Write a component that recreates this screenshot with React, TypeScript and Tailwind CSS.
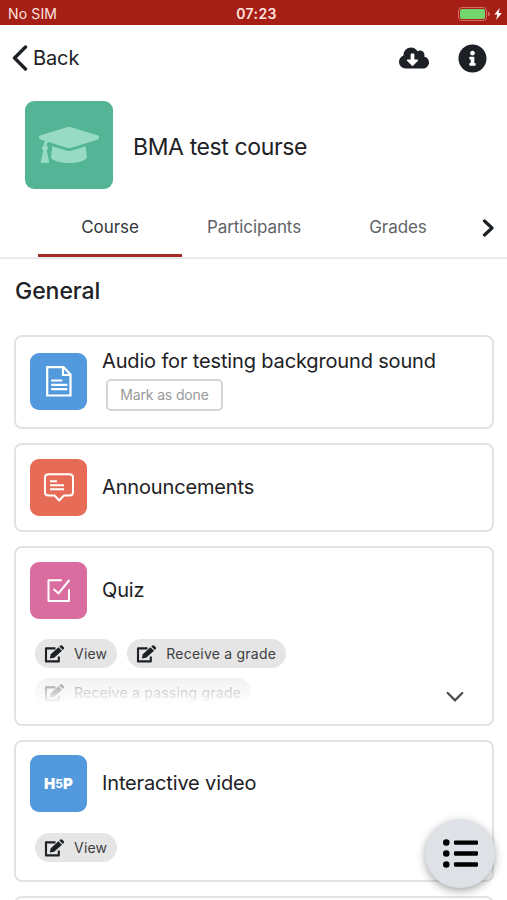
import React from 'react';
import { FaCloudDownloadAlt, FaInfoCircle, FaGraduationCap, FaListUl } from 'react-icons/fa';

interface ActivityCardProps {
  title: string;
  color: string;
  icon: React.ReactNode;
  height: string;
  padding?: string;
  action?: React.ReactNode;
  children?: React.ReactNode;
}

function ActivityCard({ title, color, icon, height, padding = 'pt-[14px]', action, children }: ActivityCardProps) {
  return (
    <section className={`shrink-0 rounded-[8px] border-2 border-[#e1e3e4] bg-white pl-[14px] ${height} ${padding}`}>
      <div className="flex h-[57px] items-center">
        <div className={`flex h-[57px] w-[57px] shrink-0 items-center justify-center rounded-[9px] text-white ${color}`}>
          {icon}
        </div>
        <div className={action ? 'ml-[15px] pb-[3px]' : 'ml-[15px] pb-px'}>
          <h3 className="text-[20px] leading-[24px] tracking-[-0.15px] whitespace-nowrap">{title}</h3>
          {action}
        </div>
      </div>
      {children}
    </section>
  );
}

const EditIcon = () => (
  <svg className="mr-[9px] text-[#1d2125]" width="21" height="18" viewBox="0 0 21 18" fill="none">
    <path d="M11.5 3.4H2V16.4H14.8V11.5" stroke="currentColor" strokeWidth="2.1" strokeLinejoin="round" />
    <path d="M5.8 13.6L6.8 9.2L14.4 2.2L18 5.7L10.2 12.8Z" fill="currentColor" />
    <path d="M15.3 1.4L16.3 0.5Q17.3 -0.2 18.3 0.7L19.6 2Q20.5 3 19.7 3.9L18.8 4.9Z" fill="currentColor" />
  </svg>
);

function Condition({ label }: { label: string }) {
  return (
    <span className="flex h-[29px] items-center rounded-full bg-[#e5e5e5] pr-[10px] pl-[9px] text-[14px] tracking-[0.22px] whitespace-nowrap text-[#3e4042]">
      <EditIcon />
      {label}
    </span>
  );
}

const PageIcon = () => (
  <svg width="26" height="31" viewBox="0 0 26 31" fill="none" stroke="currentColor" strokeWidth="2.2">
    <path d="M1.2 1.2H17.5L24.5 8.5V29.5H1.2Z" />
    <path d="M17 1.5V9H24.5" />
    <path d="M6 14.5H15.5M6 18.8H20.5M6 23.2H20.5" strokeLinecap="round" />
  </svg>
);

const ForumIcon = () => (
  <svg width="30" height="29" viewBox="0 0 30 29" fill="none" stroke="currentColor" strokeWidth="2">
    <path d="M4.5 1.2H25.5Q29 1.2 29 4.7V19Q29 22.5 25.5 22.5H20L15.2 27.5L10.4 22.5H4.5Q1 22.5 1 19V4.7Q1 1.2 4.5 1.2Z" strokeLinejoin="round" />
    <path d="M6 8.3H13M6 12.3H20M6 16.3H20" />
  </svg>
);

const QuizIcon = () => (
  <svg width="24" height="24" viewBox="0 0 24 24" fill="none" stroke="currentColor" strokeWidth="2">
    <path d="M14 1.2H1.5V22H22V11" strokeLinejoin="round" strokeLinecap="round" />
    <path d="M7 10.5L11.5 14.3L22 1.5" strokeLinecap="round" />
  </svg>
);

const H5PIcon = () => (
  <div className="flex h-[16px] items-center leading-none font-black">
    <span className="w-[11px] text-[15px]">H</span>
    <span className="w-[8px] text-center text-[12px] font-bold">5</span>
    <span className="w-[10px] text-[15px]">P</span>
  </div>
);

const tabs = ['Course', 'Participants', 'Grades'];

export default function App() {
  return (
    <div className="relative flex h-[900px] w-[507px] flex-col overflow-hidden bg-white font-['Inter',sans-serif] text-[#1d2125]">
      {/* Status bar */}
      <div className="grid h-[25px] shrink-0 grid-cols-3 items-center bg-[#a61f17] pt-[2px] pr-[5px] pl-[8px] text-[#ffe3df]">
        <span className="text-[14px] tracking-[0.15px]">No SIM</span>
        <span className="pl-[3px] text-center text-[14px] font-semibold tracking-[0.4px]">07:23</span>
        <div className="flex items-center justify-end">
          <div className="h-[14px] w-[29px] rounded-[4px] border border-[#d57069] p-px">
            <div className="h-full rounded-[2px] bg-[#72d66c]" />
          </div>
          <div className="ml-px h-[4px] w-[2px] rounded-r bg-[#d57069]" />
          <svg className="ml-[4px]" width="8" height="12" viewBox="0 0 8 12" fill="white">
            <path d="M5.8 0L0.3 6.6H3.3L2.2 12L7.8 5H4.6Z" />
          </svg>
        </div>
      </div>

      {/* Toolbar */}
      <header className="flex h-[66px] shrink-0 items-center justify-between pr-[20px] pl-[12px]">
        <button className="flex items-center text-[20px]">
          <svg width="16" height="26" viewBox="0 0 16 26" fill="none" stroke="currentColor" strokeWidth="3.4" strokeLinecap="round" strokeLinejoin="round">
            <path d="M13.5 2L2.5 13L13.5 24" />
          </svg>
          <span className="ml-[5px] tracking-[-0.1px]">Back</span>
        </button>
        <div className="flex items-center gap-[29px]">
          <FaCloudDownloadAlt className="h-[24px] w-[30px]" />
          <FaInfoCircle className="h-[29px] w-[29px]" />
        </div>
      </header>

      {/* Course summary */}
      <div className="flex shrink-0 items-center pt-[10px] pl-[25px]">
        <div className="flex h-[88px] w-[88px] items-center justify-center rounded-[9px] bg-[#53b596]">
          <FaGraduationCap className="h-[48px] w-[60px] text-[#97dbc5]" />
        </div>
        <h1 className="ml-[20px] pt-[3px] text-[23px] leading-[28px] tracking-[-0.38px]">BMA test course</h1>
      </div>

      {/* Tabs */}
      <nav className="flex h-[70px] shrink-0 items-end border-b-2 border-[#e9eaeb] pl-[38px] text-[17px] text-[#5f6367]">
        {tabs.map((tab, idx) => (
          <button
            key={tab}
            className={`flex h-[61px] w-[144px] shrink-0 items-center justify-center border-b-3 pt-[6px] tracking-[-0.08px] ${
              idx === 0 ? 'border-[#a32a24] text-[#33373b]' : 'border-transparent'
            }`}
          >
            {tab}
          </button>
        ))}
        <div className="flex h-[61px] items-center pt-[2px] pl-[12px] text-[#1d2125]">
          <svg width="13" height="18" viewBox="0 0 13 18" fill="none" stroke="currentColor" strokeWidth="3.2" strokeLinecap="round" strokeLinejoin="round">
            <path d="M2.5 2L10 9L2.5 16" />
          </svg>
        </div>
      </nav>

      {/* Course content */}
      <main className="flex flex-col pr-[13px] pl-[14px]">
        <h2 className="mb-[29px] ml-px pt-[17px] text-[23px] leading-[30px] font-medium tracking-[-0.05px]">General</h2>
        <div className="flex flex-col gap-[14px]">
          <ActivityCard
            title="Audio for testing background sound"
            color="bg-[#5399dd]"
            icon={<PageIcon />}
            height="h-[94px]"
            padding="pt-[16px]"
            action={
              <button className="mt-[6px] ml-[4px] flex h-[32px] w-[117px] items-center justify-center rounded-[5px] border-2 border-[#d6d6d6] pb-px text-[14px] tracking-[-0.15px] text-[#999]">
                Mark as done
              </button>
            }
          />
          <ActivityCard title="Announcements" color="bg-[#e76c57]" icon={<ForumIcon />} height="h-[89px]" />
          <ActivityCard title="Quiz" color="bg-[#da6d9f]" icon={<QuizIcon />} height="h-[180px]">
            <div className="flex items-end">
              <div className="relative mt-[20px] ml-[5px] flex h-[65px] w-[340px] flex-wrap content-start gap-x-[10px] gap-y-[10px] overflow-hidden">
                <Condition label="View" />
                <Condition label="Receive a grade" />
                <Condition label="Receive a passing grade" />
                <div className="absolute inset-x-0 bottom-0 h-[33px] bg-linear-to-b from-white/35 to-white" />
              </div>
              <svg className="mb-px ml-[71px]" width="18" height="12" viewBox="0 0 18 12" fill="none" stroke="#4b4d4f" strokeWidth="2.3" strokeLinecap="round">
                <path d="M1.7 2L9 9.3L16.3 2" />
              </svg>
            </div>
          </ActivityCard>
          <ActivityCard title="Interactive video" color="bg-[#5399dd]" icon={<H5PIcon />} height="h-[142px]" padding="pt-[13px]">
            <div className="mt-[21px] ml-[5px] flex">
              <Condition label="View" />
            </div>
          </ActivityCard>
          <section className="h-[90px] shrink-0 rounded-[8px] border-2 border-[#e1e3e4]" />
        </div>
      </main>

      {/* Course index button */}
      <button className="absolute top-[819px] left-[425px] flex h-[69px] w-[70px] items-center justify-center rounded-full bg-[#dee2e6] text-black shadow-[0_3px_9px_rgba(0,0,0,0.35)]">
        <FaListUl className="h-[35px] w-[35px]" />
      </button>
    </div>
  );
}
